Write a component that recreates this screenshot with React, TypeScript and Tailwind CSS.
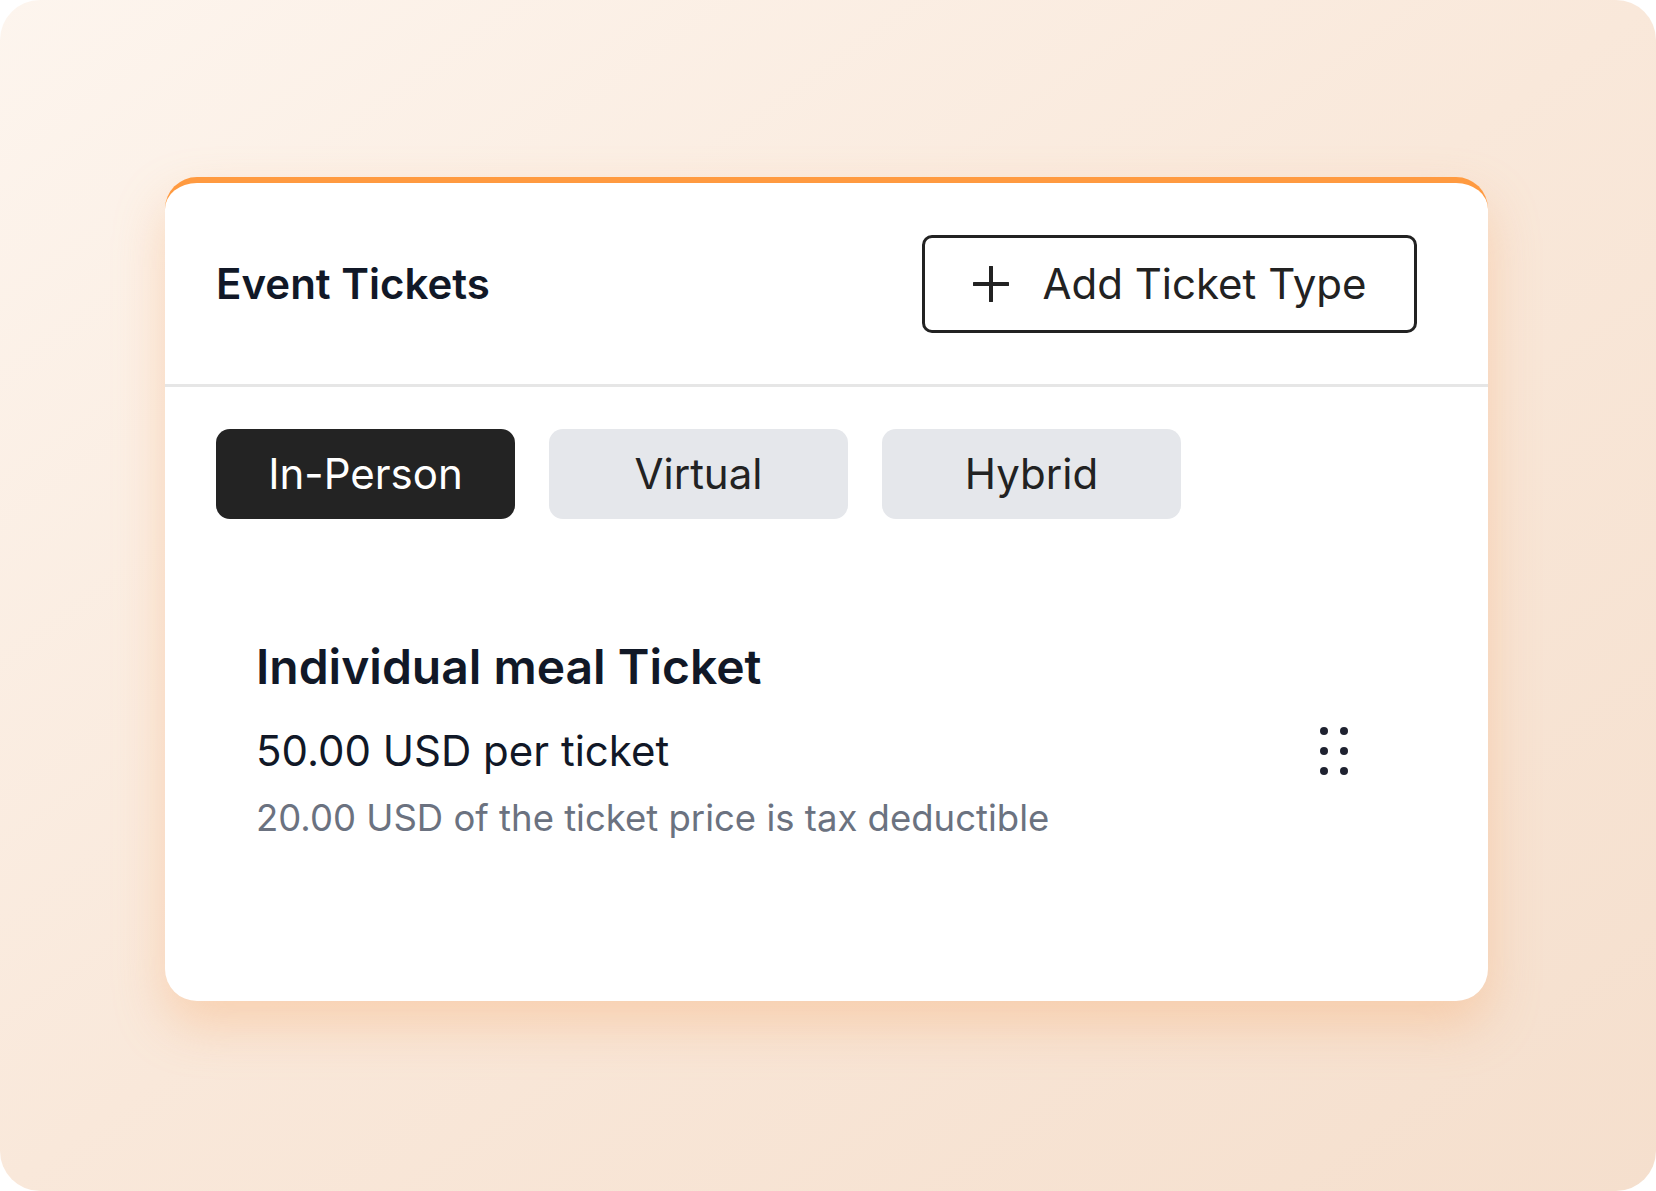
export default function App() {
  const tabs = ["In-Person", "Virtual", "Hybrid"];
  const active = "In-Person";

  return (
    <div className="w-[1656px] h-[1191px] bg-white font-['Inter',sans-serif]">
      <div className="w-full h-full rounded-[40px] bg-linear-to-br from-[#fdf5ee] via-[#f9e8da] to-[#f5dfcd] pt-[177px] pl-[165px]">
        {/* card */}
        <div className="w-[1323px] h-[824px] bg-white rounded-[32px] border-t-[6px] border-[#ff9a40] shadow-[0_24px_50px_rgba(248,170,110,0.38)] flex flex-col">
          {/* header */}
          <div className="h-[204px] flex items-center justify-between pl-[51px] pr-[71px] border-b-[3px] border-[#e6e6e6]">
            <h1 className="text-[42px] leading-none font-semibold text-[#111827]">Event Tickets</h1>
            <button className="w-[495px] h-[98px] flex items-center justify-center gap-[34px] border-[3px] border-[#222222] rounded-[10px] text-[#222222]">
              <svg width="36" height="36" viewBox="0 0 36 36" fill="none">
                <path d="M18 1v34M1 18h34" stroke="#222222" strokeWidth="4" strokeLinecap="round" />
              </svg>
              <span className="text-[42px] leading-none font-normal">Add Ticket Type</span>
            </button>
          </div>

          {/* tabs */}
          <div className="flex gap-[34px] pl-[51px] mt-[42px]">
            {tabs.map((t) => (
              <button
                key={t}
                className={
                  t === active
                    ? "w-[299px] h-[90px] rounded-[14px] bg-[#232323] text-white text-[42px] leading-none"
                    : "w-[299px] h-[90px] rounded-[14px] bg-[#e5e7eb] text-[#222222] text-[42px] leading-none"
                }
              >
                {t}
              </button>
            ))}
          </div>

          {/* ticket */}
          <div className="mt-[119px] pl-[91px] pr-[140px]">
            <h2 className="text-[48px] leading-[58px] font-semibold text-[#111827]">Individual meal Ticket</h2>
            <div className="mt-[30px] flex items-center justify-between">
              <p className="text-[42px] leading-[50px] text-[#111827]">50.00 USD per ticket</p>
              <div className="grid grid-cols-2 gap-x-[12px] gap-y-[12px]">
                {[0, 1, 2, 3, 4, 5].map((i) => (
                  <span key={i} className="w-[8px] h-[8px] rounded-full bg-[#1f2230]" />
                ))}
              </div>
            </div>
            <p className="mt-[20px] text-[36.5px] leading-[44px] text-[#6b7280]">
              20.00 USD of the ticket price is tax deductible
            </p>
          </div>
        </div>
      </div>
    </div>
  );
}
